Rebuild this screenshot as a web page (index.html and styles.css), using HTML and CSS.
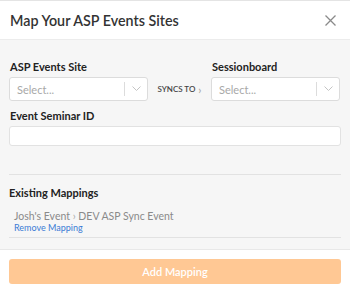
FILE: index.html
```html
<!doctype html>
<html>
<head>
    <meta name="viewport" content="width=device-width, initial-scale=1">
    <link rel="stylesheet" href="styles.css">
</head>
<body>

<div class='modal'>
    <div class='header'>
        <h2>Map Your ASP Events Sites</h2>
        <span class='close'>
            <svg width='11' height='11' viewBox='0 0 11 11'>
                <path d='M0.5 0.5 L10.5 10.5 M10.5 0.5 L0.5 10.5' stroke='#8a8a8a' stroke-width='1.3' fill='none'/>
            </svg>
        </span>
    </div>

    <div class='content'>
        <div class='sync_row'>
            <div class='field'>
                <label>ASP Events Site</label>
                <div class='select'>
                    <span class='placeholder'>Select...</span>
                    <span class='sep'></span>
                    <svg class='chevron' width='9' height='6' viewBox='0 0 9 6'>
                        <path d='M0.5 0.5 L4.5 4.5 L8.5 0.5' stroke='#c4c4c4' stroke-width='1' fill='none'/>
                    </svg>
                </div>
            </div>
            <div class='syncs'>SYNCS TO <span class='arrow'>&rsaquo;</span></div>
            <div class='field'>
                <label>Sessionboard</label>
                <div class='select'>
                    <span class='placeholder'>Select...</span>
                    <span class='sep'></span>
                    <svg class='chevron' width='9' height='6' viewBox='0 0 9 6'>
                        <path d='M0.5 0.5 L4.5 4.5 L8.5 0.5' stroke='#c4c4c4' stroke-width='1' fill='none'/>
                    </svg>
                </div>
            </div>
        </div>

        <div class='field seminar'>
            <label>Event Seminar ID</label>
            <div class='input'></div>
        </div>

        <div class='mappings'>
            <h3>Existing Mappings</h3>
            <div class='mapping'>
                <div class='pair'>Josh's Event <span class='arrow'>&rsaquo;</span> DEV ASP Sync Event</div>
                <a href='#' class='remove'>Remove Mapping</a>
            </div>
        </div>
    </div>

    <div class='footer'>
        <button>Add Mapping</button>
    </div>
</div>

</body>
</html>
```

FILE: styles.css
```css
body {
    margin: 0;
    font-family: Lato, "Open Sans", sans-serif;
    color: #222;
}

.modal {
    width: 350px;
    height: 296px;
    display: flex;
    flex-direction: column;
    border-top: 1px solid #e4e4e4;
    box-sizing: border-box;
}

.header {
    height: 38px;
    display: flex;
    align-items: center;
    justify-content: space-between;
    padding: 0 14px 0 10px;
    background-color: #fff;
    border-bottom: 1px solid #ececec;
}

h2 {
    margin: 0;
    font-size: 14.3px;
    font-weight: 600;
    color: #333;
}

.close {
    display: flex;
}

.content {
    background-color: #f6f6f6;
    padding: 0 9px 0 9px;
    height: 209px;
    box-sizing: border-box;
    padding-top: 20px;
}

.sync_row {
    display: flex;
    align-items: flex-end;
}

.field {
    display: flex;
    flex-direction: column;
}

.sync_row .field {
    width: 139px;
}

.sync_row .field:last-child {
    width: 129px;
}

label {
    font-size: 11px;
    line-height: 13px;
    font-weight: bold;
    color: #222;
    margin-bottom: 4px;
    margin-left: 1px;
}

.select {
    height: 24px;
    box-sizing: border-box;
    background-color: #fff;
    border: 1px solid #dcdcdc;
    border-radius: 3px;
    display: flex;
    align-items: center;
    padding-left: 7px;
}

.placeholder {
    flex: 1;
    font-size: 11px;
    color: #a8a8a8;
}

.sep {
    width: 1px;
    height: 14px;
    background-color: #dcdcdc;
    margin-right: 7px;
}

.chevron {
    margin-right: 6px;
}

.syncs {
    width: 63px;
    height: 24px;
    display: flex;
    align-items: center;
    justify-content: center;
    font-size: 8px;
    font-weight: 600;
    color: #444;
    gap: 3px;
}

.syncs .arrow {
    color: #aaa;
    font-size: 11px;
}

.seminar {
    margin-top: 8px;
}

.input {
    height: 18px;
    background-color: #fff;
    border: 1px solid #e2e2e2;
    border-radius: 3px;
}

.mappings {
    margin-top: 28px;
    border-top: 1px solid #e2e2e2;
}

h3 {
    margin: 0;
    margin-top: 11px;
    font-size: 11px;
    line-height: 13px;
    font-weight: bold;
    color: #222;
}

.mapping {
    padding: 11px 5px 4px 5px;
    border-bottom: 1px solid #e2e2e2;
    display: flex;
    flex-direction: column;
}

.pair {
    font-size: 10.5px;
    color: #8a8a8a;
    line-height: 12px;
}

.pair .arrow {
    color: #aaa;
}

.remove {
    font-size: 9px;
    color: #3a7bd5;
    text-decoration: none;
    line-height: 11px;
}

.footer {
    flex: 1;
    background-color: #fff;
    border-top: 1px solid #e8e8e8;
    padding: 9px 9px 0 9px;
}

button {
    width: 100%;
    height: 25px;
    border: none;
    border-radius: 3px;
    background-color: #ffc894;
    color: #fff;
    font-family: Lato, "Open Sans", sans-serif;
    font-size: 11px;
    font-weight: 600;
}
```
